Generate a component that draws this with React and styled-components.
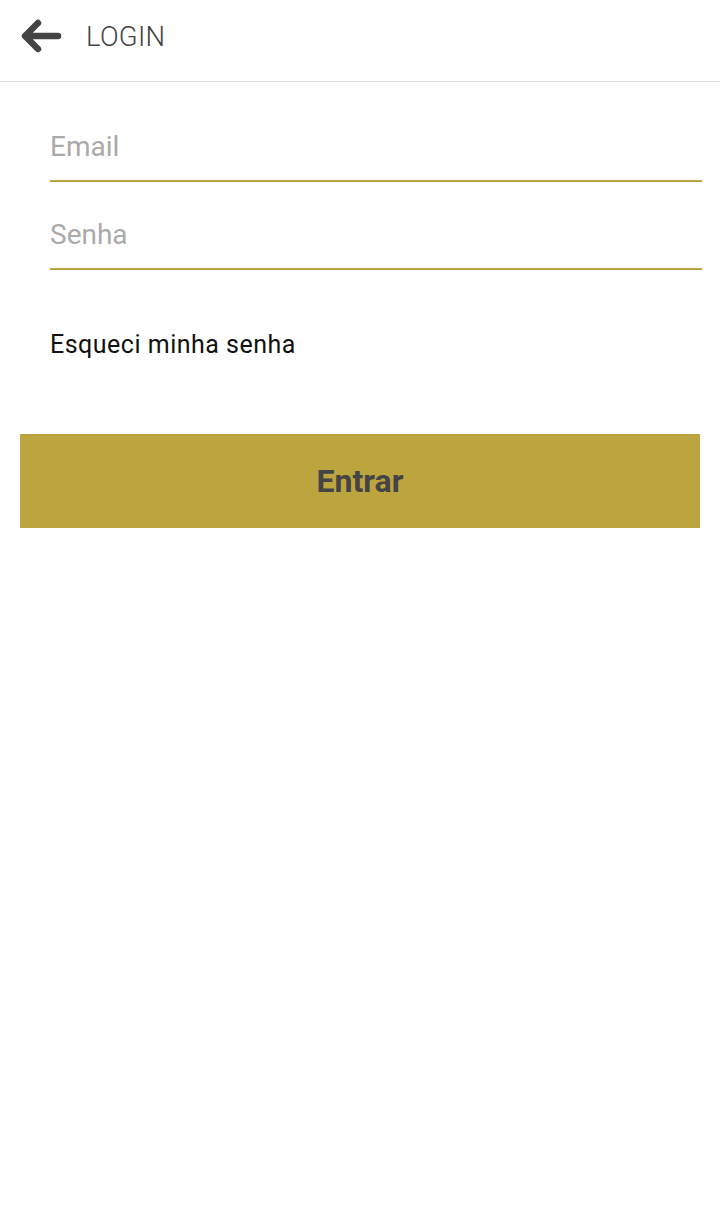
import React from "react";
import styled, { createGlobalStyle } from "styled-components";

const GlobalStyle = createGlobalStyle`
  body {
    margin: 0;
    background: #ffffff;
    font-family: Roboto, "Liberation Sans", Arial, sans-serif;
  }
`;

const Page = styled.div`
  width: 720px;
  min-height: 1226px;
  background: #ffffff;
`;

const Header = styled.header`
  height: 82px;
  display: flex;
  align-items: center;
  padding: 0 0 9px 20px;
  border-bottom: 1px solid #dcdcdc;
  box-sizing: border-box;
`;

const BackButton = styled.button`
  border: none;
  background: none;
  padding: 0;
  width: 42px;
  height: 34px;
  display: flex;
  align-items: center;
  cursor: pointer;
`;

const Title = styled.h1`
  margin: 0 0 0 24px;
  font-family: Roboto, sans-serif;
  font-weight: 300;
  font-size: 27.5px;
  color: #444444;
  letter-spacing: 0.3px;
`;

const Form = styled.form`
  display: flex;
  flex-direction: column;
  padding: 12px 18px 0 20px;
`;

const Fields = styled.div`
  display: flex;
  flex-direction: column;
  padding-left: 30px;
`;

const Input = styled.input`
  height: 88px;
  box-sizing: border-box;
  border: none;
  border-bottom: 2px solid #bca43f;
  padding: 18px 0 0 0;
  font-family: Roboto, sans-serif;
  font-size: 28px;
  color: #333;
  outline: none;
  background: transparent;
  &::placeholder {
    color: #aaaaaa;
  }
`;

const Forgot = styled.a`
  display: block;
  margin: 60px 0 0 30px;
  font-family: Roboto, sans-serif;
  font-size: 25px;
  color: #111111;
  text-decoration: none;
  letter-spacing: 0.5px;
  cursor: pointer;
`;

const Submit = styled.button`
  margin-top: 75px;
  width: 680px;
  height: 94px;
  border: none;
  background: #bca43f;
  font-family: Roboto, sans-serif;
  font-weight: 700;
  font-size: 32px;
  color: #444444;
  cursor: pointer;
`;

const ArrowIcon = () => (
  <svg width="42" height="34" viewBox="0 0 42 34">
    <path
      d="M38 17 H6 M18 4 L5 17 L18 30"
      fill="none"
      stroke="#444444"
      strokeWidth="6.5"
      strokeLinecap="round"
      strokeLinejoin="round"
    />
  </svg>
);

const App = () => {
  return (
    <Page>
      <GlobalStyle />
      <Header>
        <BackButton type="button" aria-label="Voltar">
          <ArrowIcon />
        </BackButton>
        <Title>LOGIN</Title>
      </Header>
      <Form onSubmit={(e) => e.preventDefault()}>
        <Fields>
          <Input type="email" placeholder="Email" />
          <Input type="password" placeholder="Senha" />
        </Fields>
        <Forgot>Esqueci minha senha</Forgot>
        <Submit type="submit">Entrar</Submit>
      </Form>
    </Page>
  );
};

export default App;
